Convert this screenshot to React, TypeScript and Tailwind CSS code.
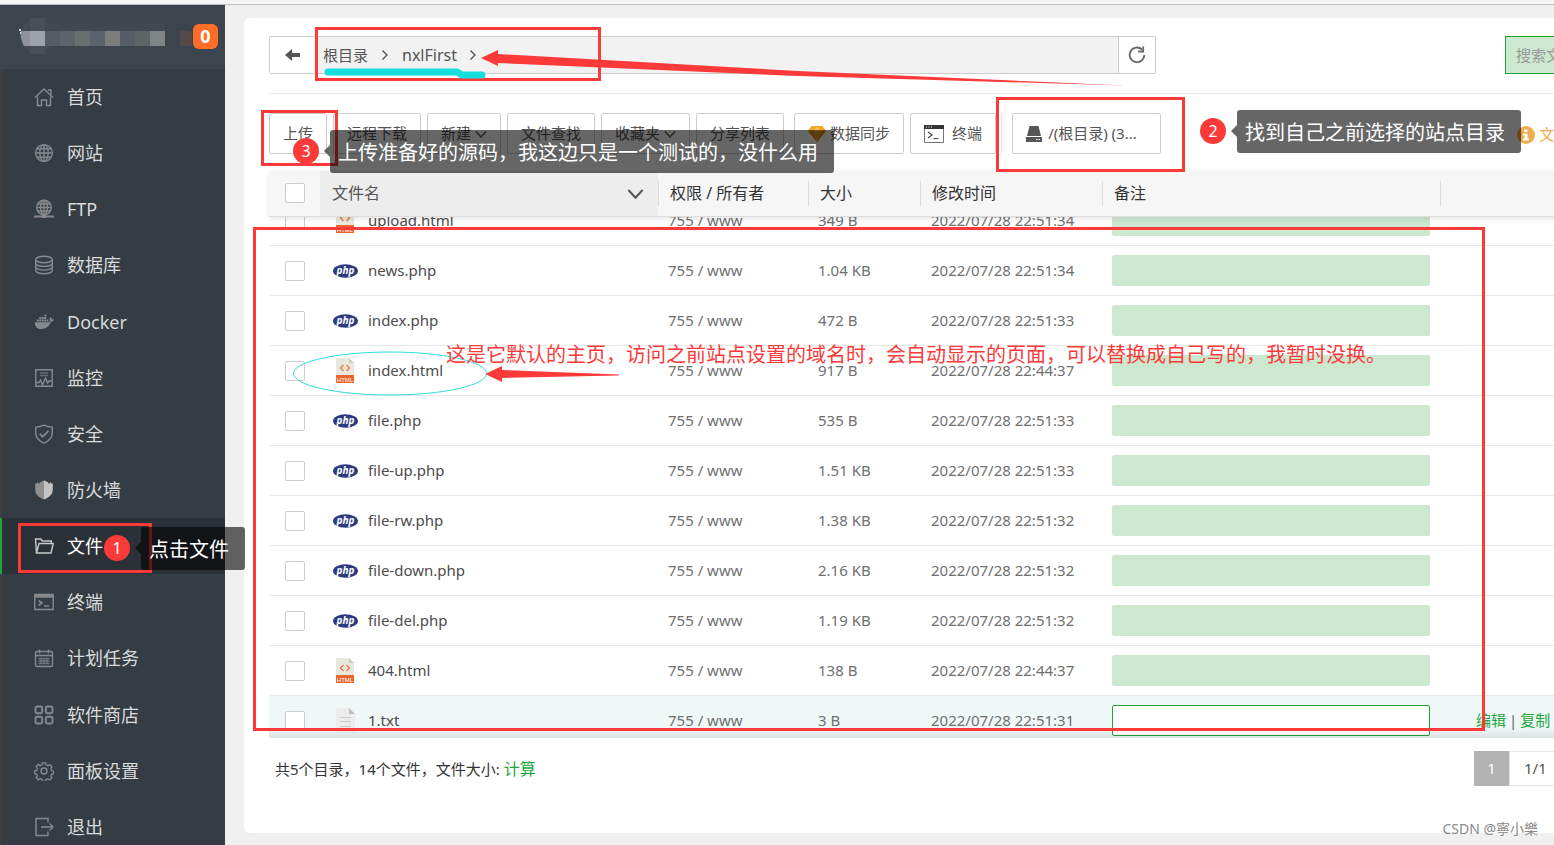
import type { ReactNode } from "react"
import clsx from "clsx"

type FileKind = "php" | "html" | "txt"

interface FileRow {
  name: string
  kind: FileKind
  size: string
  time: string
  active?: boolean
}

const FILES: FileRow[] = [
  { name: "upload.html", kind: "html", size: "349 B", time: "2022/07/28 22:51:34" },
  { name: "news.php", kind: "php", size: "1.04 KB", time: "2022/07/28 22:51:34" },
  { name: "index.php", kind: "php", size: "472 B", time: "2022/07/28 22:51:33" },
  { name: "index.html", kind: "html", size: "917 B", time: "2022/07/28 22:44:37" },
  { name: "file.php", kind: "php", size: "535 B", time: "2022/07/28 22:51:33" },
  { name: "file-up.php", kind: "php", size: "1.51 KB", time: "2022/07/28 22:51:33" },
  { name: "file-rw.php", kind: "php", size: "1.38 KB", time: "2022/07/28 22:51:32" },
  { name: "file-down.php", kind: "php", size: "2.16 KB", time: "2022/07/28 22:51:32" },
  { name: "file-del.php", kind: "php", size: "1.19 KB", time: "2022/07/28 22:51:32" },
  { name: "404.html", kind: "html", size: "138 B", time: "2022/07/28 22:44:37" },
  { name: "1.txt", kind: "txt", size: "3 B", time: "2022/07/28 22:51:31", active: true },
]

const ICONS: Record<string, ReactNode> = {
  home: (
    <>
      <path d="M1 10.5 10 2l9 8.5M14 3h3v5.5" />
      <path d="M3.5 9.5v9h4V13h5v5.5h4v-9" />
    </>
  ),
  globe: (
    <>
      <circle cx="10" cy="10" r="8.4" />
      <ellipse cx="10" cy="10" rx="4.2" ry="8.4" />
      <path d="M10 1.6v16.8M1.6 10h16.8M3 5.8h14M3 14.2h14" />
    </>
  ),
  ftp: (
    <>
      <circle cx="10" cy="8.5" r="7.3" />
      <ellipse cx="10" cy="8.5" rx="3.5" ry="7.3" />
      <path d="M10 1.2v14.6M2.7 8.5h14.6M4 5h12M4 12h12" />
      <path d="M0 17.5h20" strokeWidth="2" />
      <path d="M8 17.5h4" strokeWidth="3" />
    </>
  ),
  database: (
    <>
      <ellipse cx="10" cy="4.5" rx="8.3" ry="3.2" />
      <path d="M1.7 4.5v11c0 1.8 3.7 3.2 8.3 3.2s8.3-1.4 8.3-3.2v-11" />
      <path d="M1.7 8.2c0 1.8 3.7 3.2 8.3 3.2s8.3-1.4 8.3-3.2M1.7 11.9c0 1.800 3.7 3.200 8.3 3.200s8.300-1.400 8.300-3.200" />
    </>
  ),
  docker: (
    <g fill="currentColor" stroke="none">
      <path d="M.8 10.2h14c.9-.5 1.300-1.300 1.200-2.400-.5-1-.3-2 .4-2.800.9.600 1.300 1.300 1.300 2.200.9-.1 1.600.1 2.200.6-.5 1.300-1.500 1.800-3 1.800C15.500 14.500 12 17 7.500 17 3.300 17 .8 15 .8 10.200z" />
      <path d="M2.800 7.400h2v2h-2zM5.300 7.400h2v2h-2zM7.800 7.400h2v2h-2zM10.300 7.400h2v2h-2zM12.800 7.400h1.500v2h-1.500zM5.300 5h2v2h-2zM7.800 5h2v2h-2zM10.300 5h2v2h-2zM10.300 2.600h2v2h-2z" />
    </g>
  ),
  monitor: (
    <>
      <path d="M1.8 1.8h16.4v16.4H1.8z" />
      <path d="M6 5h8M6 7.5h8" opacity=".6" />
      <path d="M2 14.5h3L6.500 12l2 5 3-7 2 5 1.500-2H18" />
    </>
  ),
  shield: (
    <>
      <path d="M10 1.2c3 1.5 5.500 1.900 8.200 1.900v6.400c0 4.500-3.500 7.500-8.200 9.700-4.700-2.200-8.200-5.200-8.200-9.700V3.100C4.500 3.100 7 2.700 10 1.200z" />
      <path d="m5.800 9.800 3 3 5.600-6" strokeWidth="1.8" />
    </>
  ),
  firewall: (
    <g stroke="none">
      <path fill="#8f8f8f" d="M10 .5v19C5 17.500 1.200 14.500 1.200 9.500v-6h1.500v-1h1.500v1h1.500V2h2V1z" />
      <path fill="#c4c4c4" d="M10 .5v19c5-2 8.800-5 8.800-10v-6h-1.500v-1h-1.500v1h-1.500V2h-2V1z" />
    </g>
  ),
  folder: (
    <>
      <path d="M2.500 17 1.500 3h5.300l1.500 2h9v2.500" />
      <path d="M2.500 17 5 7.500h14.200L17 17z" />
    </>
  ),
  terminal: (
    <>
      <path d="M.8 2.500h18.400v15H.8z" />
      <path d="M1 4.200h18" strokeWidth="3" />
      <path d="m4.500 8.500 3.500 2.500-3.500 2.500M10 14h5" strokeWidth="1.600" />
    </>
  ),
  calendar: (
    <>
      <rect x="1.500" y="3.500" width="17" height="15" rx="1.500" />
      <path d="M5.500 1.500v4M14.500 1.500v4M1.500 7.500h17" />
      <path d="M4.500 10.500h11M4.500 13h11M4.500 15.500h11M7 10v6M10 10v6M13 10v6" opacity=".7" />
    </>
  ),
  apps: (
    <g strokeWidth="1.900">
      <rect x="1.500" y="1.500" width="6.700" height="6.700" rx="1.500" />
      <rect x="11.800" y="1.500" width="6.700" height="6.700" rx="1.500" />
      <rect x="1.500" y="11.800" width="6.700" height="6.700" rx="1.500" />
      <rect x="11.800" y="11.800" width="6.700" height="6.700" rx="1.500" />
    </g>
  ),
  gear: (
    <>
      <path
        d="M8.300 1.500h3.400l.5 2.300 2 .9 2.100-1.300 2.200 2.300-1.200 2 .8 2 2 .5v3l-2.100.4-.8 2 1.200 2-2.200 2.200-2-1.300-2 .8-.5 1.700H8.300l-.5-1.900-2-.8-2 1.300-2.200-2.200 1.300-2-.8-2-1.900-.4v-3l2-.5.800-2-1.300-2 2.200-2.300 2 1.300 2-.9z"
        transform="translate(.6 .4) scale(.94)"
      />
      <circle cx="10" cy="10" r="3" />
    </>
  ),
  exit: (
    <>
      <path d="M14 5.500v-4H2v17h12v-4" />
      <path d="M7 10h12M15.500 6.500 19 10l-3.500 3.500" />
    </>
  ),
}

const MENU = [
  { icon: "home", label: "首页" },
  { icon: "globe", label: "网站" },
  { icon: "ftp", label: "FTP" },
  { icon: "database", label: "数据库" },
  { icon: "docker", label: "Docker" },
  { icon: "monitor", label: "监控" },
  { icon: "shield", label: "安全" },
  { icon: "firewall", label: "防火墙" },
  { icon: "folder", label: "文件" },
  { icon: "terminal", label: "终端" },
  { icon: "calendar", label: "计划任务" },
  { icon: "apps", label: "软件商店" },
  { icon: "gear", label: "面板设置" },
  { icon: "exit", label: "退出" },
]

const MASK_COLORS = [
  "#9fa2a8",
  "#565b68",
  "#5c636b",
  "#68706f",
  "#5a626d",
  "#7c7d79",
  "#565d69",
  "#5d6566",
  "#7f8487",
]

function MaskedHost() {
  return (
    <svg className="h-[36px] w-[173px]" viewBox="0 0 173 36" aria-hidden="true">
      <circle cx="18" cy="18" r="17" fill="#434a53" />
      <path d="M26 0h-15v36h15z" fill="#484f58" />
      <path d="M26 6h120v7H26z" fill="#414851" />
      <path d="M2 13h9v15H5c-2-4-4-9-3-15z" fill="#8f949b" />
      {MASK_COLORS.map((color, i) => (
        <rect key={i} x={11 + i * 15} y="13" width="15" height="15" fill={color} />
      ))}
      <path d="M0 11h2v2H0zM1 14h1v2H1z" fill="#d5d7d9" />
      <path d="M161 13h10l2 3v10l-2 2h-10z" fill="#564a48" />
    </svg>
  )
}

function Sidebar() {
  return (
    <aside className="w-[225px] shrink-0 bg-[#353d44]">
      <div className="flex h-16 items-center justify-between bg-[#3c444d] pr-[7px] pb-0.5 pl-[19px]">
        <MaskedHost />
        <span className="flex size-[25px] items-center justify-center rounded-md bg-[#ff6d26] font-['Noto_Sans'] text-lg leading-none font-bold text-white">
          0
        </span>
      </div>
      <nav className="grid h-[786px] auto-rows-fr">
        {MENU.map((item) => {
          const active = item.label === "文件"
          return (
            <a
              key={item.label}
              href="#"
              className={clsx(
                "flex items-center border-l-2 pl-8 text-lg",
                active
                  ? "border-[#20a53a] bg-[#2c3138] text-white"
                  : "border-[#403e3f] text-[#d8dadb]",
              )}
            >
              <svg
                viewBox="0 0 20 20"
                className={clsx("mr-[13px] size-5", active ? "text-[#c8c8c8]" : "text-[#868a8d]")}
                fill="none"
                stroke="currentColor"
                strokeWidth="1.4"
                aria-hidden="true"
              >
                {ICONS[item.icon]}
              </svg>
              {item.label}
            </a>
          )
        })}
      </nav>
    </aside>
  )
}

function Chevron({ className, d }: { className: string; d: string }) {
  return (
    <svg
      viewBox="0 0 12 12"
      className={className}
      fill="none"
      stroke="currentColor"
      strokeWidth="1.4"
      aria-hidden="true"
    >
      <path d={d} />
    </svg>
  )
}

const DOWN = "M1 3.500 6 9l5-5.500"
const RIGHT = "M3.500 1.500 8 6l-4.500 4.500"

function PathBar() {
  return (
    <div className="flex items-center">
      <div className="flex h-[38px] flex-1 rounded-[2px] border border-[#ccc] bg-[#f2f2f2] text-[#555]">
        <button
          type="button"
          aria-label="返回"
          className="flex w-[46px] items-center justify-center bg-white"
        >
          <svg viewBox="0 0 16 12" className="h-3 w-4" fill="#555" aria-hidden="true">
            <path d="M0 6 7 0v4h8v4H7v4z" />
          </svg>
        </button>
        <div className="flex flex-1 items-center pl-[7px]">
          <a href="#">根目录</a>
          <Chevron className="mx-[11px] size-3" d={RIGHT} />
          <a href="#" className="text-base">
            nxlFirst
          </a>
          <Chevron className="mx-2.5 size-3" d={RIGHT} />
        </div>
        <button
          type="button"
          aria-label="刷新"
          className="flex w-[37px] items-center justify-center border-l border-[#ccc] bg-white"
        >
          <svg
            viewBox="0 0 18 18"
            className="size-[18px]"
            fill="none"
            stroke="#666"
            strokeWidth="1.8"
            aria-hidden="true"
          >
            <path d="M14 3.500A7.300 7.300 0 1 0 16.300 9" />
            <path d="M15.200.5v5h-5" />
          </svg>
        </button>
      </div>
      <input
        type="text"
        aria-label="搜索"
        placeholder="搜索文件/目录"
        className="ml-[349px] h-[38px] w-[249px] border border-[#20a53a] bg-[#cce8cf] px-2.5 placeholder:text-[#999]"
      />
    </div>
  )
}

function ToolButton({ children, className }: { children: ReactNode; className?: string }) {
  return (
    <button
      type="button"
      className={clsx(
        "flex h-[41px] items-center rounded-[2px] border border-[#ccc] bg-white px-[13px] whitespace-nowrap text-[#555]",
        className,
      )}
    >
      {children}
    </button>
  )
}

function Toolbar() {
  return (
    <div className="flex items-start gap-1.5 pt-[19px] pb-[15px]">
      <ToolButton>上传</ToolButton>
      <ToolButton>远程下载</ToolButton>
      <ToolButton>
        新建
        <Chevron className="ml-1 size-3" d={DOWN} />
      </ToolButton>
      <ToolButton>文件查找</ToolButton>
      <ToolButton>
        收藏夹
        <Chevron className="ml-1 size-3" d={DOWN} />
      </ToolButton>
      <ToolButton>分享列表</ToolButton>
      <ToolButton className="ml-1">
        <svg viewBox="0 0 18 16" className="mr-1 h-4 w-[18px]" aria-hidden="true">
          <path d="M3.500 0h11L18 5 9 16 0 5z" fill="#f5a623" />
          <path d="M0 5h18L9 16z" fill="#e08e0b" />
          <path d="M5.500 5 9 16l3.500-11L9 0z" fill="#ffc04d" />
          <path d="M5.500 5h7L9 16z" fill="#f0a01e" />
        </svg>
        数据同步
      </ToolButton>
      <ToolButton>
        <svg viewBox="0 0 20 18" className="mr-2 h-[18px] w-5" fill="none" aria-hidden="true">
          <path d="M.5.500h19v17H.5z" stroke="#777" />
          <path d="M0 0h20v4H0z" fill="#333" />
          <path d="M2 2h1M4.500 2h1M7 2h1" stroke="#fff" />
          <path d="m4 7 4 3-4 3M9.500 13.500h5" stroke="#444" strokeWidth="1.200" />
        </svg>
        终端
      </ToolButton>
      <div className="-ml-px flex border-l border-[#e5e5e5] pl-2.5">
        <ToolButton className="w-[149px]">
          <svg viewBox="0 0 16 16" className="mr-1.5 size-4" fill="#555" aria-hidden="true">
            <path d="M3.500 0h9L15 10H1zM0 11h16v5H0z" />
            <path d="M10 13.500h1.500M12.500 13.500H14" stroke="#fff" />
          </svg>
          /(根目录) (3...
        </ToolButton>
      </div>
      <div className="ml-[350px] flex h-[43px] items-center whitespace-nowrap text-[#f0ad4e]">
        <svg viewBox="0 0 18 18" className="mr-1 size-[18px]" aria-hidden="true">
          <circle cx="9" cy="9" r="9" fill="#f0ad4e" />
          <path d="M7 3.500h3.500V6H7zM6 7.500h4.500v5h1.500v2H6v-2h1.500v-3H6z" fill="#fff" />
        </svg>
        文件操作
      </div>
    </div>
  )
}

function Columns() {
  return (
    <colgroup>
      <col className="w-[51px]" />
      <col className="w-[338px]" />
      <col className="w-[150px]" />
      <col className="w-[112px]" />
      <col className="w-[182px]" />
      <col className="w-[338px]" />
      <col />
    </colgroup>
  )
}

function Tick({ label }: { label: string }) {
  return (
    <input
      type="checkbox"
      aria-label={label}
      className="mx-auto block size-5 appearance-none rounded-[2px] border border-[#ccc] bg-white"
    />
  )
}

function FileIcon({ kind }: { kind: FileKind }) {
  if (kind === "php") {
    return (
      <svg viewBox="0 0 25 14" className="h-3.5 w-[25px]" aria-hidden="true">
        <ellipse cx="12.500" cy="7" rx="12.500" ry="6.700" fill="#2d3a80" />
        <text
          x="12.500"
          y="9.500"
          textAnchor="middle"
          fill="#fff"
          className="font-['Open_Sans'] text-[10px] font-bold italic"
        >
          php
        </text>
      </svg>
    )
  }
  if (kind === "html") {
    return (
      <svg viewBox="0 0 18 25" className="mx-[3px] h-[25px] w-[18px]" aria-hidden="true">
        <path d="M0 0h13l5 5v13H0z" fill="#e9e8df" />
        <path d="M13 0v5h5z" fill="#cfcec5" />
        <path d="M7.500 7 4.500 10l3 3M10.500 7l3 3-3 3" fill="none" stroke="#ee6f3c" strokeWidth="1.200" />
        <path d="M0 17h18v8H0z" fill="#e9662f" />
        <text
          x="9"
          y="23.500"
          textAnchor="middle"
          fill="#fff"
          className="font-['Liberation_Sans'] text-[6px]"
        >
          HTML
        </text>
      </svg>
    )
  }
  return (
    <svg viewBox="0 0 19 25" className="mx-[3px] h-[25px] w-[19px]" aria-hidden="true">
      <path d="M0 0h13l6 6v19H0z" fill="#ececec" />
      <path d="M13 0v6h6z" fill="#bfbfbf" />
      <path d="M4 9.500h11M4 13.500h11M4 18.500h11" stroke="#ccc" />
    </svg>
  )
}

const HEADINGS = ["权限 / 所有者", "大小", "修改时间", "备注", ""]

function FileTable() {
  return (
    <>
      <table className="relative z-10 w-full table-fixed bg-[#f6f6f6] text-left text-base text-[#333] shadow-[0_2px_6px_rgba(0,0,0,0.1)]">
        <Columns />
        <thead>
          <tr className="h-[45px] border-b border-[#ddd]">
            <th className="p-0">
              <Tick label="全选" />
            </th>
            <th className="bg-[#ededed] px-3 py-0 font-normal text-[#555]">
              <div className="flex items-center justify-between">
                文件名
                <Chevron className="mr-0.5 size-[17px]" d={DOWN} />
              </div>
            </th>
            {HEADINGS.map((text) => (
              <th key={text} className="p-0 font-normal">
                <div className="flex h-[25px] items-center border-l border-[#ddd] pl-[11px]">{text}</div>
              </th>
            ))}
          </tr>
        </thead>
      </table>
      <div className="relative min-h-0 flex-1 overflow-hidden">
        <table className="-mt-[21px] w-full table-fixed text-left text-[#707070]">
          <Columns />
          <tbody>
            {FILES.map((file) => (
              <tr
                key={file.name}
                className={clsx("h-[50px] border-b border-[#e8e8e8]", file.active && "bg-[#eff8f7]")}
              >
                <td className="p-0">
                  <Tick label={file.name} />
                </td>
                <td className="px-[13px] py-0">
                  <div className="flex items-center text-[#4c4c4c]">
                    <div className="mr-2.5 w-[25px] shrink-0">
                      <FileIcon kind={file.kind} />
                    </div>
                    {file.name}
                  </div>
                </td>
                <td className="px-2.5 py-0">755 / www</td>
                <td className="px-2.5 py-0">{file.size}</td>
                <td className="px-[11px] py-0 whitespace-nowrap">{file.time}</td>
                <td className="px-2.5 py-0">
                  <input
                    type="text"
                    aria-label={`${file.name} 备注`}
                    className={clsx(
                      "block h-[31px] w-full rounded-[2px] border px-2",
                      file.active ? "border-[#20a53a] bg-white" : "border-[#cce8cf] bg-[#cce8cf]",
                    )}
                  />
                </td>
                <td className="py-0 pr-0 pl-9 whitespace-nowrap text-[#20a53a]">
                  {file.active && (
                    <>
                      <a href="#">编辑</a>
                      <span className="mx-[3px] text-[#666]">|</span>
                      <a href="#">复制</a>
                    </>
                  )}
                </td>
              </tr>
            ))}
          </tbody>
        </table>
        <div className="absolute inset-x-0 bottom-0 h-2.5 bg-linear-to-b from-transparent to-black/8" />
      </div>
    </>
  )
}

function TableFooter() {
  return (
    <div className="flex h-[95px] items-start justify-between pt-[13px]">
      <p className="pl-1.5 leading-[37px] text-[#333]">
        共5个目录，14个文件，文件大小:{" "}
        <a href="#" className="text-base text-[#20a53a]">
          计算
        </a>
      </p>
      <div className="mr-[177px] flex h-[35px] w-[103px] leading-[35px]">
        <span className="w-[35px] bg-[#b3b3b3] text-center text-white">1</span>
        <span className="flex-1 border border-[#e5e5e5] pl-3.5 leading-[33px] text-[#555]">1/1</span>
      </div>
    </div>
  )
}

function Marker({ n, className }: { n: number; className: string }) {
  return (
    <span
      className={clsx(
        "absolute flex size-[26px] items-center justify-center rounded-full bg-[#fc3a3a] text-base leading-none text-white",
        className,
      )}
    >
      {n}
    </span>
  )
}

function Callout({ children, className }: { children: ReactNode; className: string }) {
  return (
    <div
      className={clsx(
        "absolute h-[43px] rounded-[3px] bg-black/60 pr-4 pl-2 text-xl leading-[45px] whitespace-nowrap text-white",
        className,
      )}
    >
      <span className="absolute top-[15px] -left-1.5 border-y-[6px] border-r-[6px] border-y-transparent border-r-black/60" />
      {children}
    </div>
  )
}

function Annotations() {
  return (
    <div className="pointer-events-none absolute inset-0 z-20">
      <div className="absolute top-[523px] left-[18px] h-[50px] w-[134px] border-3 border-[#fc3a3a]" />
      <div className="absolute top-[27px] left-[315px] h-[54px] w-[286px] border-3 border-[#fc3a3a]" />
      <div className="absolute top-[110px] left-[261px] h-[56px] w-[77px] border-3 border-[#fc3a3a]" />
      <div className="absolute top-[97px] left-[996px] h-[75px] w-[189px] border-3 border-[#fc3a3a]" />
      <div className="absolute top-[227px] left-[253px] h-[504px] w-[1232px] border-3 border-[#fc3a3a]" />

      <svg className="absolute top-0 left-0 h-[420px] w-[1140px]" viewBox="0 0 1140 420" aria-hidden="true">
        <path
          d="M328 72h129l5 3h20"
          fill="none"
          stroke="#16dede"
          strokeWidth="7"
          strokeLinecap="round"
          strokeLinejoin="round"
        />
        <path d="M481 58 498 50v4l300 17 327 14.500-327-9.500-300-13v3z" fill="#fc3a3a" />
        <path d="M485 374 502 366v4l117 4.500v1L502 378v4z" fill="#fc3a3a" />
        <ellipse cx="390" cy="373.500" rx="96.500" ry="21.500" fill="none" stroke="#2fdcdc" />
      </svg>

      <Marker n={1} className="top-[535px] left-[104px]" />
      <Callout className="top-[527px] left-[141px]">点击文件</Callout>
      <Marker n={2} className="top-[118px] left-[1200px]" />
      <Callout className="top-[110px] left-[1237px]">找到自己之前选择的站点目录</Callout>
      <Marker n={3} className="top-[138px] left-[293px]" />
      <Callout className="top-[130px] left-[330px]">
        上传准备好的源码，我这边只是一个测试的，没什么用
      </Callout>
      <p className="absolute top-[340px] left-[446px] text-xl leading-[30px] whitespace-nowrap text-[#fc3a3a]">
        这是它默认的主页，访问之前站点设置的域名时，会自动显示的页面，可以替换成自己写的，我暂时没换。
      </p>
      <span className="absolute right-4 bottom-1.5 text-sm text-[#888]">CSDN @寧小樂</span>
    </div>
  )
}

export default function App() {
  return (
    <div className="relative flex h-screen flex-col overflow-hidden bg-[#f0f0f0] font-['Noto_Sans','Noto_Sans_CJK_SC',sans-serif] text-[15px]">
      <div className="h-[5px] shrink-0 border-b border-[#bfbfbf] bg-[#f6f6f6]" />
      <div className="flex min-h-0 flex-1 overflow-hidden">
        <Sidebar />
        <main className="-mr-[200px] flex min-w-0 flex-1 flex-col pt-[13px] pb-3 pl-[19px]">
          <section className="flex min-h-0 flex-1 flex-col rounded-md bg-white pt-[18px] pl-[25px]">
            <div className="border-b border-[#ebebeb] pb-[19px]">
              <PathBar />
            </div>
            <Toolbar />
            <FileTable />
            <TableFooter />
          </section>
        </main>
      </div>
      <Annotations />
    </div>
  )
}
